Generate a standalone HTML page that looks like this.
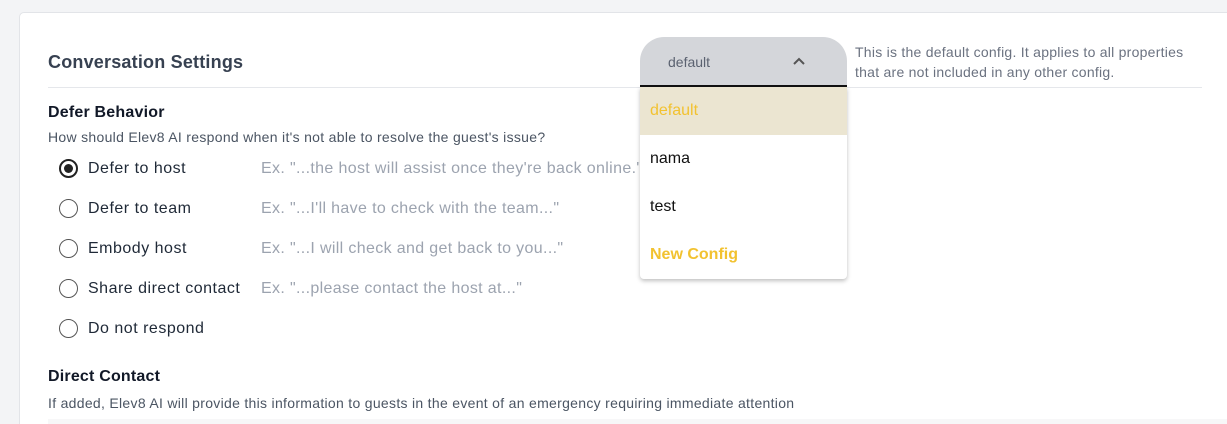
<!DOCTYPE html>
<html><head><meta charset="utf-8"><style>
*{box-sizing:border-box;margin:0;padding:0}
html,body{width:1227px;height:424px;overflow:hidden}
body{background:#f3f4f6;font-family:"Liberation Sans",sans-serif;position:relative}
.card{position:absolute;left:19px;top:12px;width:1220px;height:420px;background:#fff;border:1px solid #e2e4e8;border-radius:5px}
.a{position:absolute;white-space:nowrap}
.r{position:absolute;left:59px;width:19px;height:19px;border:1.6px solid #555;border-radius:50%}
.r.on{border:2px solid #222}
.r.on::after{content:"";position:absolute;left:3px;top:3px;width:9px;height:9px;border-radius:50%;background:#222}
.lbl{left:88px;font-size:16px;color:#1f2937;letter-spacing:0.5px}
.ex{left:261px;font-size:16px;color:#9ca3af;letter-spacing:0.35px}
.sub{font-size:14px;color:#4b5563;letter-spacing:0.3px}
</style></head><body>
<div class="card"></div>
<div class="a" style="left:48px;top:52px;font-size:18px;font-weight:bold;color:#374151;letter-spacing:0.2px">Conversation Settings</div>
<div class="a" style="left:48px;top:87px;width:1154px;height:1px;background:#e5e7eb"></div>
<div class="a" style="left:48px;top:104px;font-size:16px;font-weight:bold;color:#111827;letter-spacing:0.2px">Defer Behavior</div>
<div class="a sub" style="left:48px;top:129px">How should Elev8 AI respond when it's not able to resolve the guest's issue?</div>
<div class="r on" style="top:159px"></div><div class="a lbl" style="top:160px">Defer to host</div><div class="a ex" style="top:160px">Ex. "...the host will assist once they're back online."</div>
<div class="r" style="top:199px"></div><div class="a lbl" style="top:200px">Defer to team</div><div class="a ex" style="top:200px">Ex. "...I'll have to check with the team..."</div>
<div class="r" style="top:239px"></div><div class="a lbl" style="top:240px">Embody host</div><div class="a ex" style="top:240px">Ex. "...I will check and get back to you..."</div>
<div class="r" style="top:279px"></div><div class="a lbl" style="top:280px">Share direct contact</div><div class="a ex" style="top:280px">Ex. "...please contact the host at..."</div>
<div class="r" style="top:319px"></div><div class="a lbl" style="top:320px">Do not respond</div>
<div class="a" style="left:48px;top:368px;font-size:16px;font-weight:bold;color:#111827;letter-spacing:0.2px">Direct Contact</div>
<div class="a sub" style="left:48px;top:395px">If added, Elev8 AI will provide this information to guests in the event of an emergency requiring immediate attention</div>
<div class="a" style="left:48px;top:419px;width:1180px;height:6px;background:#f7f7f8"></div>
<div class="a" style="left:640px;top:37px;width:207px;height:50px;background:#d4d6da;border-radius:24px 24px 0 0;border-bottom:2px solid #111"></div>
<div class="a" style="left:668px;top:54px;font-size:14px;color:#5b6270">default</div>
<svg class="a" style="left:792px;top:56px" width="14" height="10" viewBox="0 0 14 10"><path d="M2 8 L7 3 L12 8" fill="none" stroke="#555" stroke-width="2"/></svg>
<div class="a" style="left:855px;top:42px;font-size:14px;line-height:20px;color:#6b7280;letter-spacing:0.25px">This is the default config. It applies to all properties<br>that are not included in any other config.</div>
<div class="a" style="left:640px;top:87px;width:207px;height:192px;background:#fff;border-radius:0 0 4px 4px;box-shadow:0 2px 4px rgba(0,0,0,.25)">
<div style="height:48px;background:#ebe5d1;color:#f2c230;font-size:16px;padding:15px 10px">default</div>
<div style="height:48px;font-size:16px;color:#111;padding:15px 10px">nama</div>
<div style="height:48px;font-size:16px;color:#111;padding:15px 10px">test</div>
<div style="height:48px;font-size:16px;font-weight:bold;color:#f2c230;padding:15px 10px">New Config</div>
</div>
</body></html>
